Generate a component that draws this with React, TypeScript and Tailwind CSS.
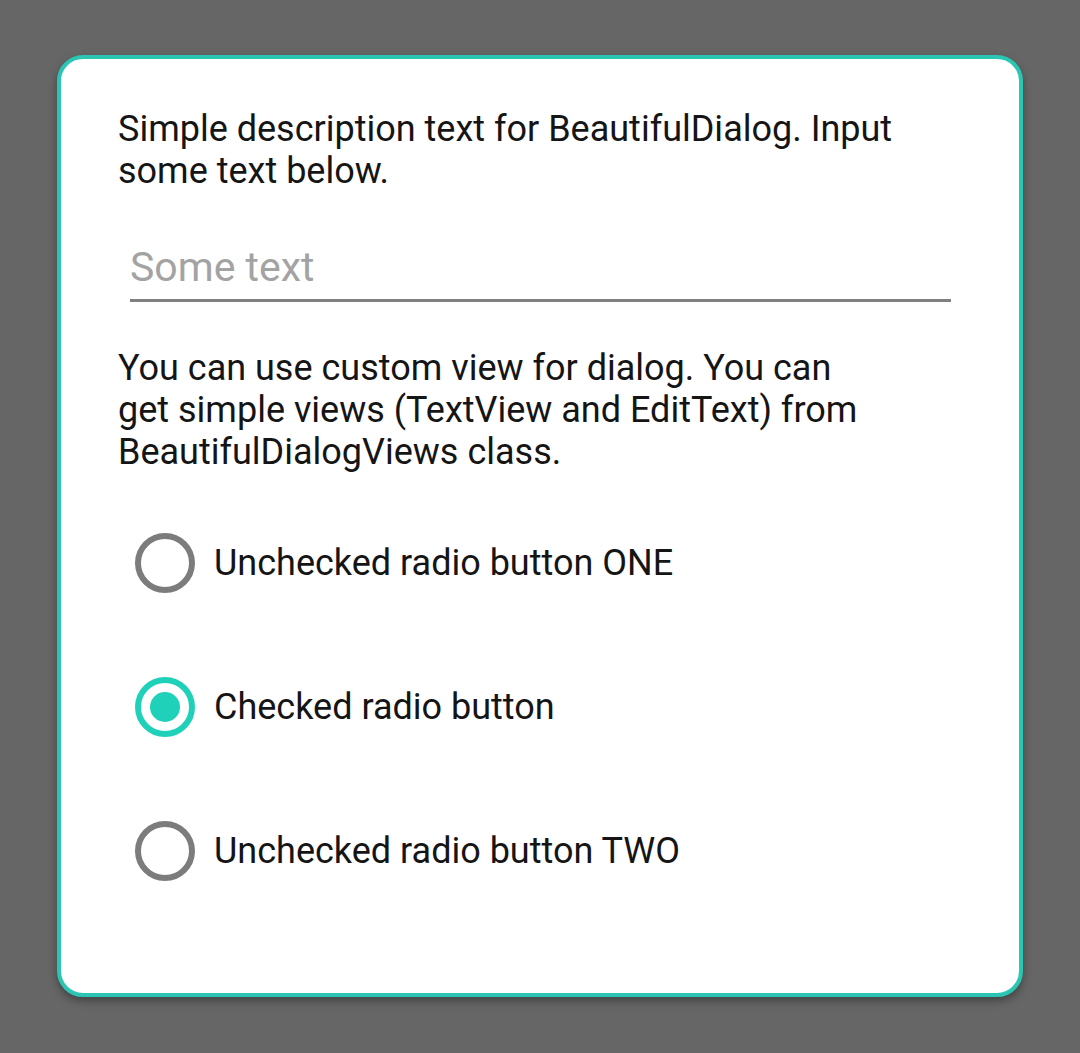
import React from "react";

type RadioProps = { label: string; checked?: boolean };

const Radio: React.FC<RadioProps> = ({ label, checked }) => {
  return (
    <div className="flex items-center h-[144px]">
      <div className="w-[98px] flex justify-center">
        {checked ? (
          <span className="w-[60px] h-[60px] rounded-full border-[6px] border-[#1fd1b9] flex items-center justify-center">
            <span className="w-[30px] h-[30px] rounded-full bg-[#1fd1b9]" />
          </span>
        ) : (
          <span className="w-[60px] h-[60px] rounded-full border-[6px] border-[#7c7c7c]" />
        )}
      </div>
      <span className="text-[36px] leading-[42px] text-[#151515]">{label}</span>
    </div>
  );
};

export default function App() {
  return (
    <div
      className="min-h-[1053px] bg-[#666666] pt-[55px] pl-[57px]"
      style={{ fontFamily: "Roboto, 'Noto Sans', sans-serif" }}
    >
      <div className="w-[966px] h-[942px] bg-white rounded-[26px] border-[4px] border-[#2bc6b3] shadow-[0_4px_8px_rgba(0,0,0,0.35)] pt-[49px] pl-[57px] pr-[40px]">
        <p className="text-[36px] leading-[42px] text-[#151515] w-[800px]">
          Simple description text for BeautifulDialog. Input some text below.
        </p>
        <div className="mt-[51px] ml-[12px] w-[821px]">
          <div className="text-[41px] leading-[48px] text-[#a3a3a3]">Some text</div>
          <div className="mt-[8px] h-[3px] bg-[#808080]" />
        </div>
        <p className="mt-[45px] text-[36px] leading-[42px] text-[#151515] w-[760px]">
          You can use custom view for dialog. You can get simple views (TextView and EditText) from
          BeautifulDialogViews class.
        </p>
        <div className="mt-[18px] -ml-[2px]">
          <Radio label="Unchecked radio button ONE" />
          <Radio label="Checked radio button" checked />
          <Radio label="Unchecked radio button TWO" />
        </div>
      </div>
    </div>
  );
}
